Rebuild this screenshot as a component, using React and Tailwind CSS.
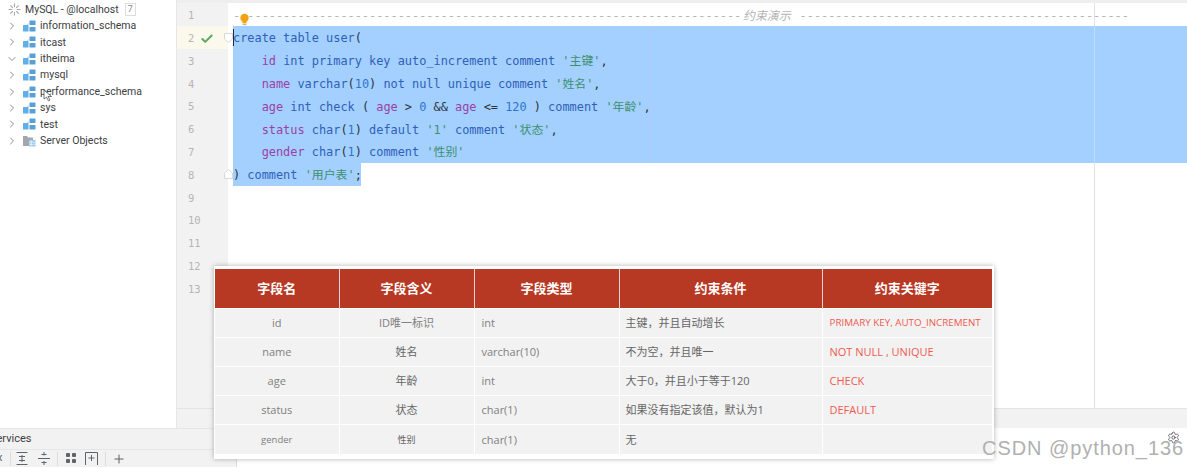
import React from 'react';
import { ChevronRight, ChevronDown, Check, Plus, Settings } from 'lucide-react';

const uiFont = "font-['Roboto','Noto_Sans_CJK_SC',sans-serif]";

// database tree in the left panel
const schemas = [
  { name: 'information_schema' },
  { name: 'itcast' },
  { name: 'itheima', open: true },
  { name: 'mysql' },
  { name: 'performance_schema' },
  { name: 'sys' },
  { name: 'test' },
];

// colour classes for the SQL tokens
const K = ({ children }) => <span className="text-[#2f5fb8]">{children}</span>;
const F = ({ children }) => <span className="text-[#9c3fa8]">{children}</span>;
const S = ({ children }) => <span className="text-[#3f8f6f]">{children}</span>;
const N = ({ children }) => <span className="text-[#2f74d0]">{children}</span>;

const codeLines = [
  null,
  <><K>create table user</K><span>(</span></>,
  <>{'    '}<F>id</F> <K>int primary key auto_increment comment</K> <S>'主键'</S>,</>,
  <>{'    '}<F>name</F> <K>varchar</K>(<N>10</N>) <K>not null unique comment</K> <S>'姓名'</S>,</>,
  <>{'    '}<F>age</F> <K>int check</K> ( <F>age</F> &gt; <N>0</N> && <F>age</F> &lt;= <N>120</N> ) <K>comment</K> <S>'年龄'</S>,</>,
  <>{'    '}<F>status</F> <K>char</K>(<N>1</N>) <K>default</K> <S>'1'</S> <K>comment</K> <S>'状态'</S>,</>,
  <>{'    '}<F>gender</F> <K>char</K>(<N>1</N>) <K>comment</K> <S>'性别'</S></>,
  <>) <K>comment</K> <S>'用户表'</S>;</>,
];

const tableRows = [
  { field: 'id', meaning: 'ID唯一标识', type: 'int', rule: '主键，并且自动增长', key: 'PRIMARY KEY, AUTO_INCREMENT', small: true },
  { field: 'name', meaning: '姓名', type: 'varchar(10)', rule: '不为空，并且唯一', key: 'NOT  NULL , UNIQUE' },
  { field: 'age', meaning: '年龄', type: 'int', rule: '大于0，并且小于等于120', key: 'CHECK' },
  { field: 'status', meaning: '状态', type: 'char(1)', rule: '如果没有指定该值，默认为1', key: 'DEFAULT' },
  { field: 'gender', meaning: '性别', type: 'char(1)', rule: '无', key: '', tiny: true },
];

const SchemaIcon = () => (
  <svg width="13" height="12" viewBox="0 0 13 12" className="shrink-0">
    <rect x="0" y="5" width="5.5" height="6.5" rx="0.5" fill="#62aee6" />
    <rect x="6.5" y="0.5" width="6" height="4.5" rx="0.5" fill="#5a9fd6" />
    <rect x="6.5" y="7" width="6" height="4.5" rx="0.5" fill="#5a9fd6" />
    <path d="M4 5 L6.5 3 M5.5 8.5 H6.5" stroke="#9cc4e2" strokeWidth="0.8" />
  </svg>
);

const ServerIcon = () => (
  <svg width="13" height="12" viewBox="0 0 13 12" className="shrink-0">
    <path d="M0 1 H4 L5 2.5 H10 V11 H0 Z" fill="#a3a7ab" />
    <rect x="6" y="5" width="6.5" height="6.5" fill="#9cc8ea" />
    <path d="M6 7.2 H12.5 M6 9.3 H12.5 M8.2 5 V11.5" stroke="#fff" strokeWidth="0.6" />
  </svg>
);

const Spinner = () => (
  <svg width="13" height="13" viewBox="0 0 14 14" stroke="#a8a8a8" strokeWidth="1.2" strokeLinecap="round">
    <path d="M7 1 V4 M7 10 V13 M1 7 H4 M10 7 H13 M2.8 2.8 L4.9 4.9 M9.1 9.1 L11.2 11.2 M2.8 11.2 L4.9 9.1 M9.1 4.9 L11.2 2.8" />
  </svg>
);

const Bulb = () => (
  <svg width="11" height="14" viewBox="0 0 11 14">
    <circle cx="5.5" cy="5" r="4.2" fill="#f2a20c" />
    <rect x="3.5" y="9" width="4" height="1.4" fill="#f2a20c" />
    <rect x="3.5" y="11" width="4" height="1.2" fill="#b9b9b9" />
  </svg>
);

const FoldMark = () => (
  <svg width="9" height="10" viewBox="0 0 9 10" className="absolute left-[-4px] top-[7px]">
    <path d="M0.5 0.5 H8.5 V6 L4.5 9.5 L0.5 6 Z" fill="#fff" stroke="#d8d8d8" />
  </svg>
);

const FoldEnd = () => (
  <svg width="9" height="10" viewBox="0 0 9 10" className="absolute left-[-4px] top-[6px]">
    <path d="M0.5 9.5 H8.5 V4 L4.5 0.5 L0.5 4 Z" fill="#fff" stroke="#d8d8d8" />
  </svg>
);

const AlignIcon = ({ flip }) => (
  <svg width="12" height="13" viewBox="0 0 12 13" stroke="#5f6468" fill="none">
    {flip ? <path d="M0 6.5 H12 M3.5 2.5 H8.5 M6 0 V3.5 M3.5 10.5 H8.5 M6 9 V13" /> : <path d="M0.5 0.5 H11.5 M0.5 12.5 H11.5 M3 4.5 H9 M3 8.5 H9 M6 3 V10" />}
  </svg>
);

const App = () => {
  return (
    <div className={`relative w-[1187px] h-[467px] overflow-hidden bg-white ${uiFont}`}>
      <div className="flex h-[428px]">
        {/* database tree */}
        <aside className="w-[177px] shrink-0 border-r border-[#e6e6e6] bg-white pt-[1.5px] text-[10.5px] text-[#3c4043]">
          <div className="flex h-[16.4px] items-center pl-[8px]">
            <Spinner />
            <span className="ml-[4px]">MySQL - @localhost</span>
            <span className="ml-[6px] border border-[#dddddd] px-[2px] text-[9px] leading-[11px] text-[#8a8a8a]">7</span>
          </div>
          {schemas.map(s => (
            <div key={s.name} className="flex h-[16.4px] items-center pl-[6px]">
              {s.open
                ? <ChevronDown size={12} strokeWidth={1.5} className="text-[#666]" />
                : <ChevronRight size={12} strokeWidth={1.5} className="text-[#666]" />}
              <span className="ml-[5px]"><SchemaIcon /></span>
              <span className="ml-[4px]">{s.name}</span>
            </div>
          ))}
          <div className="flex h-[16.4px] items-center pl-[6px]">
            <ChevronRight size={12} strokeWidth={1.5} className="text-[#666]" />
            <span className="ml-[5px]"><ServerIcon /></span>
            <span className="ml-[4px]">Server Objects</span>
          </div>
        </aside>

        <div className="flex min-w-0 flex-1 flex-col">
          <div className="h-[3px] bg-[#eeeeee]" />
          {/* editor */}
          <div className="relative flex-1 overflow-hidden bg-white pt-[0.5px] font-['DejaVu_Sans_Mono','Noto_Sans_CJK_SC',monospace] text-[11.9px] text-[#2b3440]">
            <div className="absolute bottom-0 left-0 top-0 w-[51px] bg-[#f2f2f2]" />
            <div className="absolute bottom-0 left-[917px] top-0 w-px bg-[#e2e2e2]" />
            {Array.from({ length: 13 }, (_, i) => {
              const line = codeLines[i];
              const selected = i >= 1 && i <= 6;
              return (
                <div key={i} className="relative flex h-[22.83px] items-center">
                  <div className={`relative z-10 flex h-full w-[51px] shrink-0 items-center pl-[11px] pt-[2px] text-[10.5px] text-[#b5b5b5] ${i === 1 ? 'bg-[#fbf9ec]' : ''}`}>
                    <span className="w-[12px]">{i + 1}</span>
                    {i === 1 && <Check size={14} strokeWidth={3.4} className="text-[#5da65d]" />}
                  </div>
                  <div className="relative ml-[5px] h-full flex-1 whitespace-pre leading-[24.8px]">
                    {i === 0 && (
                      <div className="flex text-[#b4b4b4]">
                        <span className="w-[510px]">{'- ' + '-'.repeat(69)}</span>
                        <span className="italic">约束演示</span>
                        <span className="ml-[9px]">{'-'.repeat(46)}</span>
                        <span className="absolute left-[6px] top-[9px]"><Bulb /></span>
                      </div>
                    )}
                    {selected && <div className="absolute inset-0 bg-[#a3d0ff]" />}
                    {i === 7 && <div className="absolute left-0 top-0 h-full w-[128px] bg-[#a3d0ff]" />}
                    {selected && <div className="absolute bottom-0 left-[417px] top-0 w-px bg-[#b6c8fb]" />}
                    {selected && <div className="absolute bottom-0 left-[861px] top-0 w-px bg-[#c0dcfb]" />}
                    {line && <span className="relative">{line}</span>}
                    {i === 1 && <div className="absolute bottom-[3px] left-0 top-[3px] w-px bg-[#1b2a44]" />}
                  </div>
                  {i === 1 && <span className="absolute left-[51px] top-0 z-20"><FoldMark /></span>}
                  {i === 7 && <span className="absolute left-[51px] top-0 z-20"><FoldEnd /></span>}
                </div>
              );
            })}
          </div>
          <div className="h-[20px] shrink-0 border-t border-[#e4e4e4] bg-[#f2f2f2]" />
        </div>
      </div>

      {/* services panel at the bottom */}
      <div className="flex h-[39px]">
        <div className="w-[237px] shrink-0 border-r border-[#dddddd] bg-[#f2f2f2]">
          <div className="flex h-[22px] items-center border-y border-[#e6e6e6] pt-[1px] text-[11px] text-[#3c4043]">
            <span className="ml-[-10px]">Services</span>
          </div>
          <div className="flex h-[17px] items-center text-[#5f6468]">
            <span className="ml-[-3px] w-[13px] text-[11px]">x</span>
            <span className="h-[14px] w-px bg-[#dcdcdc]" />
            <span className="ml-[5px]"><AlignIcon /></span>
            <span className="ml-[10px]"><AlignIcon flip /></span>
            <span className="ml-[7px] h-[14px] w-px bg-[#dcdcdc]" />
            <svg width="11" height="11" viewBox="0 0 11 11" fill="#5f6468" className="ml-[8px]">
              <rect width="4" height="4" rx="1" /><rect x="6" width="4" height="4" rx="1" /><rect y="6" width="4" height="4" rx="1" /><rect x="6" y="6" width="4" height="4" rx="1" />
            </svg>
            <svg width="13" height="13" viewBox="0 0 13 13" fill="none" stroke="#5f6468" className="ml-[8px]">
              <path d="M0.5 13 V0.5 H12.5 V13 M6.5 3 V9 M3.5 6 H9.5" />
            </svg>
            <span className="ml-[7px] h-[14px] w-px bg-[#dcdcdc]" />
            <Plus size={14} strokeWidth={1.8} className="ml-[6px]" />
          </div>
        </div>
        <div className="relative flex-1 bg-white">
          <Settings size={13} strokeWidth={1.6} className="absolute right-[7px] top-[3px] text-[#555]" />
        </div>
      </div>

      {/* slide table pasted over the editor */}
      <div className="absolute left-[214px] top-[266px] w-[780px] bg-white pb-[5px] pl-[1px] pr-[2px] pt-[3px] shadow-[0_0_5px_rgba(0,0,0,0.3)]">
        <table className="w-[777px] table-fixed border-collapse font-['Open_Sans','Noto_Sans_CJK_SC',sans-serif] text-[11px] text-[#808080]">
          <colgroup>
            <col className="w-[124px]" />
            <col className="w-[135px]" />
            <col className="w-[145px]" />
            <col className="w-[203px]" />
            <col className="w-[170px]" />
          </colgroup>
          <thead>
            <tr className="h-[39px] bg-[#b73823] font-['Noto_Sans_CJK_SC',sans-serif] text-[13px] text-white">
              {['字段名', '字段含义', '字段类型', '约束条件', '约束关键字'].map(h => (
                <th key={h} className="border-x border-[#e9d5d0] pb-[2px] font-bold first:border-l-0 last:border-r-0">{h}</th>
              ))}
            </tr>
          </thead>
          <tbody>
            {tableRows.map(r => (
              <tr key={r.field} className="h-[29.2px] border-t border-white bg-[#f2f2f2]">
                <td className={`border-r border-white pt-[1px] text-center ${r.tiny ? 'text-[9.5px]' : ''}`}>{r.field}</td>
                <td className={`border-r border-white pt-[1px] text-center ${r.tiny ? 'text-[9px]' : ''} ${r.small ? '' : 'text-[#666666]'}`}>{r.meaning}</td>
                <td className="border-r border-white pl-[7px] pt-[1px]">{r.type}</td>
                <td className="border-r border-white pl-[6px] pt-[1px] text-[#666666]">{r.rule}</td>
                <td className={`pl-[7px] pt-[1px] text-[#ee5a4f] ${r.small ? 'text-[9.8px]' : ''}`}>{r.key}</td>
              </tr>
            ))}
          </tbody>
        </table>
      </div>

      {/* pointer over the tree */}
      <svg width="10" height="13" viewBox="0 0 10 13" className="absolute left-[43px] top-[89px]">
        <path d="M1 1 L1 10 L3.5 8 L5.5 12 L7 11 L5 7.5 L8.5 7.5 Z" fill="#fff" stroke="#555" strokeWidth="0.8" />
      </svg>

      {/* watermark */}
      <div className="absolute left-[982px] top-[433px] font-['Liberation_Sans',sans-serif] text-[20px] tracking-[0.94px] text-[#b0b0b0]">CSDN @python_136</div>
    </div>
  );
};

export default App;
